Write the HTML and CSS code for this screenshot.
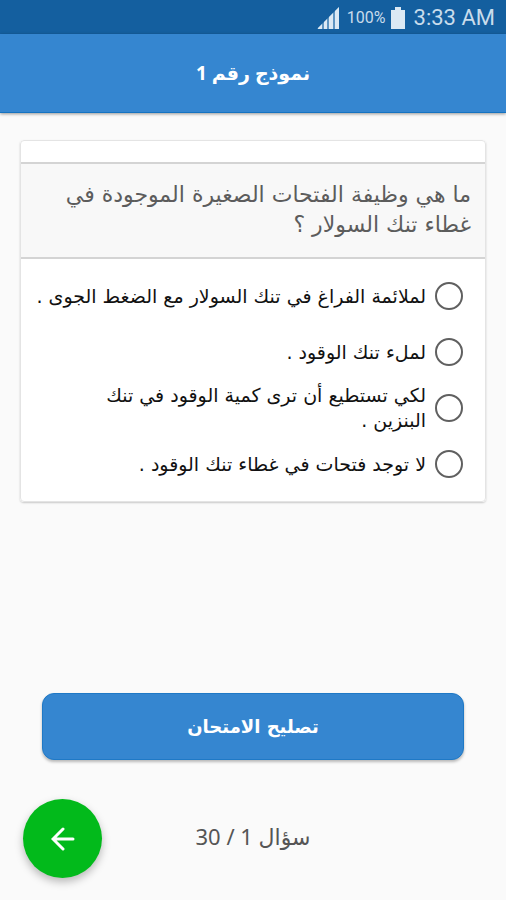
FILE: index.html
```html
<!DOCTYPE html>
<html lang="ar" dir="rtl">
<head>
<meta charset="utf-8">
<meta name="viewport" content="width=device-width, initial-scale=1">
<title>نموذج رقم 1</title>
<link rel="stylesheet" href="styles.css">
</head>
<body>
<div class="status" dir="ltr">
  <svg class="signal" viewBox="0 0 22 22" aria-hidden="true"><path class="dim" d="M0 22L22 0V22z"/><path d="M1 21L5 17V22H1zM7 15L10 12V22H7zM12 10L16 6V22H12zM18 4L22 0V22H18z"/></svg>
  <span class="percent">100%</span>
  <svg class="battery" viewBox="0 0 14 22" aria-hidden="true"><path d="M4 0H10V3H14V22H0V3H4z"/></svg>
  <span class="clock">3:33 AM</span>
</div>
<header class="bar"><h1>نموذج رقم 1</h1></header>
<main>
  <form class="exam">
    <fieldset class="card">
      <legend class="question">ما هي وظيفة الفتحات الصغيرة الموجودة في غطاء تنك السولار ؟</legend>
      <div class="answers">
        <label class="answer"><input type="radio" name="answer"><span>لملائمة الفراغ في تنك السولار مع الضغط الجوى .</span></label>
        <label class="answer"><input type="radio" name="answer"><span>لملء تنك الوقود .</span></label>
        <label class="answer"><input type="radio" name="answer"><span>لكي تستطيع أن ترى كمية الوقود في تنك<br>البنزين .</span></label>
        <label class="answer"><input type="radio" name="answer"><span>لا توجد فتحات في غطاء تنك الوقود .</span></label>
      </div>
    </fieldset>
    <button class="submit" type="button">تصليح الامتحان</button>
  </form>
</main>
<footer class="footer" dir="ltr">
  <button class="next" type="button" aria-label="السؤال التالي"><svg viewBox="0 0 24 24" aria-hidden="true"><path d="M22 12H3M12 2L2 12L12 22"/></svg></button>
  <p class="counter" dir="rtl">سؤال 1 / 30</p>
</footer>
</body>
</html>
```
FILE: styles.css
```css
* { box-sizing: border-box; }
body {
  margin: 0;
  min-height: 100vh;
  display: flex;
  flex-direction: column;
  background: #fafafa;
  color: #111;
  font-family: "DejaVu Sans", sans-serif;
}
.status {
  height: 34px;
  padding: 1px 11px 0;
  display: flex;
  align-items: center;
  justify-content: flex-end;
  background: #145f9f;
  color: #c8dcec;
  font-family: Roboto, sans-serif;
}
.status svg { height: 22px; fill: #dce9f4; }
.status .dim { fill: #5f95c2; }
.percent { margin: 0 5px 0 8px; font-size: 16px; }
.clock { margin-left: 9px; font-size: 22px; }
.bar {
  height: 79px;
  display: flex;
  align-items: center;
  justify-content: center;
  border-bottom: 1px solid #1673c1;
  background: #3586d0;
  box-shadow: 0 1px 3px #0006;
}
h1 {
  margin: 0;
  color: #fff;
  font: bold 19px "Noto Sans", "DejaVu Sans", sans-serif;
}
main { flex: 1; display: flex; padding: 27px 20px 0; }
.exam { flex: 1; min-width: 0; display: flex; flex-direction: column; }
.card {
  min-width: 0;
  margin: 0;
  padding: 21px 0 0;
  border: 1px solid #e4e4e4;
  border-radius: 4px;
  background: #fff;
  box-shadow: 0 1px 2px #0003;
}
.question {
  float: right;
  width: 100%;
  padding: 16px 14px 17px;
  border: solid #d4d4d4;
  border-width: 2px 0;
  background: #f8f8f8;
  color: #5c5c5c;
  font-size: 22px;
  line-height: 30px;
}
.answers { clear: both; padding: 9px 22px 9px 12px; }
.answer {
  min-height: 56px;
  display: flex;
  align-items: center;
  gap: 9px;
  font-size: 19px;
  line-height: 25px;
}
.answer input {
  appearance: none;
  flex: none;
  width: 28px;
  height: 28px;
  margin: 0;
  border: 2px solid #606060;
  border-radius: 50%;
}
.answer input:checked { background: radial-gradient(#3586d0 45%, #fff 50%); }
.submit {
  margin: auto 22px 0;
  height: 67px;
  border: 1px solid #1f79c6;
  border-radius: 12px;
  background: #3586d0;
  color: #fff;
  font: bold 18px "DejaVu Sans", sans-serif;
  box-shadow: 0 2px 3px #0004;
}
.footer {
  display: grid;
  grid-template-columns: 79px 1fr 79px;
  align-items: center;
  padding: 39px 23px 22px;
}
.next {
  width: 79px;
  height: 79px;
  padding: 0;
  display: grid;
  place-items: center;
  border: 0;
  border-radius: 50%;
  background: #02ba1b;
  box-shadow: 0 4px 8px #0004;
}
.next svg { width: 24px; fill: none; stroke: #fff; stroke-width: 3; stroke-linecap: round; }
.counter {
  margin: 0;
  padding-bottom: 6px;
  text-align: center;
  color: #555;
  font: 22px "Noto Sans", "DejaVu Sans", sans-serif;
}
```
